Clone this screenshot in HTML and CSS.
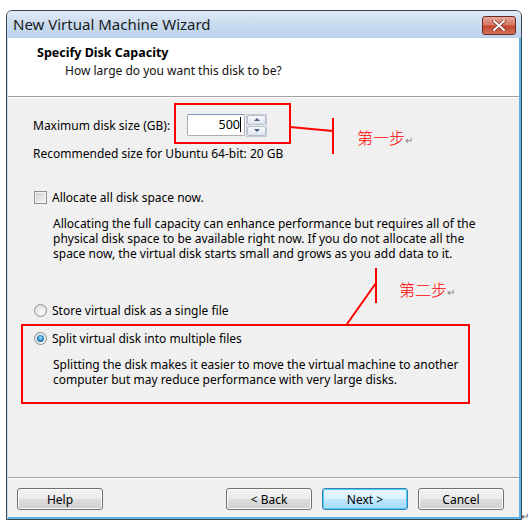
FILE: index.html
```html
<!DOCTYPE html>
<html lang="en">
<head>
    <meta charset="UTF-8">
    <title>New Virtual Machine Wizard</title>
    <link rel="stylesheet" href="styles.css">
</head>
<body>

  <div class="window">
    <div class="titlebar">
      <span class="title">New Virtual Machine Wizard</span>
      <div class="close-btn">
        <svg width="14" height="11" viewBox="0 0 14 11">
          <path d="M2 1 L12 10 M12 1 L2 10" stroke="#7a2a1c" stroke-width="3.4" stroke-linecap="round"/>
          <path d="M2 1 L12 10 M12 1 L2 10" stroke="#ffffff" stroke-width="2" stroke-linecap="round"/>
        </svg>
      </div>
    </div>

    <div class="client">
      <div class="header">
        <div class="header-title">Specify Disk Capacity</div>
        <div class="header-sub">How large do you want this disk to be?</div>
      </div>

      <div class="content">
        <div class="size-row">
          <span class="size-label">Maximum disk size (GB):</span>
          <div class="spin-box">
            <div class="spin-input">500<span class="caret"></span></div>
            <div class="spin-buttons">
              <div class="spin-btn"><span class="tri-up"></span></div>
              <div class="spin-btn"><span class="tri-down"></span></div>
            </div>
          </div>
        </div>
        <p class="recommend">Recommended size for Ubuntu 64-bit: 20 GB</p>

        <label class="option check-row">
          <span class="checkbox"></span>
          Allocate all disk space now.
        </label>
        <p class="desc">Allocating the full capacity can enhance performance but requires all of the physical disk space to be available right now. If you do not allocate all the space now, the virtual disk starts small and grows as you add data to it.</p>

        <label class="option radio-row first-radio">
          <span class="radio"></span>
          Store virtual disk as a single file
        </label>
        <label class="option radio-row second-radio">
          <span class="radio checked"></span>
          Split virtual disk into multiple files
        </label>
        <p class="desc">Splitting the disk makes it easier to move the virtual machine to another computer but may reduce performance with very large disks.</p>
      </div>

      <div class="footer">
        <button class="btn">Help</button>
        <div class="nav-buttons">
          <button class="btn">&lt; Back</button>
          <button class="btn default">Next &gt;</button>
          <button class="btn">Cancel</button>
        </div>
      </div>
    </div>
  </div>

  <!-- red annotations drawn over the screenshot -->
  <svg class="marks" width="529" height="531">
    <rect x="175" y="104" width="115" height="39" fill="none" stroke="#ff0000" stroke-width="2"/>
    <path d="M290 127 L333 131 M333 118 L333 154" stroke="#ff0000" stroke-width="2" fill="none"/>
    <path d="M376 268 L376 303 M376 283 L347 324" stroke="#ff0000" stroke-width="2" fill="none"/>
    <rect x="22" y="325" width="447" height="78" fill="none" stroke="#ff0000" stroke-width="2"/>
  </svg>
  <span class="note note-one">第一步<span class="ret">↵</span></span>
  <span class="note note-two">第二步<span class="ret">↵</span></span>
  <span class="end-mark">↵</span>

</body>
</html>
```

FILE: styles.css
```css
body {
    margin: 0;
    background-color: #fff;
    font-family: "Noto Sans", "Open Sans", sans-serif;
    font-size: 12px;
    color: #000;
    position: relative;
    width: 529px;
    height: 531px;
    overflow: hidden;
}

.window {
    margin: 10px 0 0 6px;
    width: 516px;
    height: 510px;
    box-sizing: border-box;
    border: 1px solid #3b4654;
    border-radius: 6px 6px 0 0;
    background-color: #c4d8ee;
    display: flex;
    flex-direction: column;
}

.titlebar {
    height: 27px;
    display: flex;
    align-items: center;
    justify-content: space-between;
    padding: 0 5px 0 6px;
    background: linear-gradient(#dfe9f5, #c6d9ee 60%, #bcd3ec);
    border-radius: 5px 5px 0 0;
}

.title {
    font-size: 15px;
    color: #1a1a1a;
    margin-top: -1px;
}

.close-btn {
    width: 34px;
    height: 19px;
    margin-top: 2px;
    box-sizing: border-box;
    border: 1px solid #6b2a22;
    border-radius: 3px;
    background: linear-gradient(#e9a99a, #d47461 48%, #c4452c 52%, #d5735c);
    display: flex;
    align-items: center;
    justify-content: center;
}

.client {
    flex: 1;
    display: flex;
    flex-direction: column;
    margin-left: 1px;
    border-right: 2px solid #5bb3e3;
    border-bottom: 2px solid #5bb3e3;
    background-color: #f0f0f0;
}

.header {
    height: 58px;
    background-color: #fff;
    padding-left: 29px;
    border-bottom: 1px solid #a0a0a0;
    box-shadow: 0 1px 0 #fff;
}

.header-title {
    font-weight: bold;
    font-size: 12.5px;
    margin-top: 7px;
    line-height: 16px;
}

.header-sub {
    margin-left: 28px;
    margin-top: 2px;
    line-height: 16px;
    color: #111;
}

.content {
    flex: 1;
    padding-left: 25px;
    border-bottom: 1px solid #a0a0a0;
    box-shadow: 0 1px 0 #fff;
}

.size-row {
    display: flex;
    align-items: center;
    margin-top: 17px;
    height: 22px;
}

.size-label {
    width: 154px;
}

.spin-box {
    display: flex;
    align-items: center;
}

.spin-input {
    width: 58px;
    height: 22px;
    box-sizing: border-box;
    border: 1px solid #abadb3;
    border-top-color: #7a9ac4;
    border-radius: 2px;
    background-color: #fff;
    text-align: right;
    padding-right: 3px;
    line-height: 20px;
    font-size: 12.5px;
}

.caret {
    display: inline-block;
    width: 1px;
    height: 15px;
    background-color: #000;
    vertical-align: -3px;
}

.spin-buttons {
    margin-left: 1px;
    display: flex;
    flex-direction: column;
    gap: 1px;
    border: 1px solid #c6cbd3;
    padding: 0;
}

.spin-btn {
    width: 19px;
    height: 10px;
    background: linear-gradient(#f6f8fb, #dfe5ee);
    border: 1px solid #b4bdcb;
    border-radius: 2px;
    box-sizing: border-box;
    display: flex;
    align-items: center;
    justify-content: center;
}

.tri-up {
    border-left: 3px solid transparent;
    border-right: 3px solid transparent;
    border-bottom: 3px solid #4a6186;
}

.tri-down {
    border-left: 3px solid transparent;
    border-right: 3px solid transparent;
    border-top: 3px solid #4a6186;
}

p {
    margin: 0;
    line-height: 15px;
}

.recommend {
    margin-top: 10px;
}

.option {
    display: flex;
    align-items: center;
    gap: 5px;
    line-height: 15px;
    margin-left: 1px;
}

.check-row {
    margin-top: 29px;
}

.desc {
    margin: 11px 0 0 20px;
    width: 432px;
}

.first-radio {
    margin-top: 42px;
}

.second-radio {
    margin-top: 13px;
}

.checkbox {
    width: 13px;
    height: 13px;
    box-sizing: border-box;
    border: 1px solid #8e8f8f;
    background: linear-gradient(135deg, #cbcfd5, #f6f6f6);
    box-shadow: inset 0 0 0 1px #f4f4f4;
}

.radio {
    width: 13px;
    height: 13px;
    box-sizing: border-box;
    border: 1px solid #8e8f8f;
    border-radius: 50%;
    background: radial-gradient(circle at 60% 65%, #fbfbfb, #d3d6da);
    position: relative;
}

.radio.checked::after {
    content: "";
    position: absolute;
    left: 2px;
    top: 2px;
    width: 7px;
    height: 7px;
    border-radius: 50%;
    background: radial-gradient(circle at 50% 40%, #9fe0ff, #1d79b5 60%, #0e4d7a);
}

.footer {
    height: 39px;
    box-sizing: border-box;
    display: flex;
    justify-content: space-between;
    align-items: flex-start;
    padding: 10px 15px 0 9px;
}

.nav-buttons {
    display: flex;
    gap: 10px;
}

.btn {
    width: 86px;
    height: 22px;
    margin: 0;
    padding: 0;
    font-family: "Noto Sans", "Open Sans", sans-serif;
    font-size: 12px;
    color: #000;
    border: 1px solid #707070;
    border-radius: 3px;
    background: linear-gradient(#f2f2f2, #ebebeb 50%, #dddddd 51%, #cfcfcf);
    box-shadow: inset 0 0 0 1px #fcfcfc;
}

.btn.default {
    border-color: #3c7fb1;
    background: linear-gradient(#eaf6fd, #d9f0fc 50%, #bee6fd 51%, #a7d9f5);
    box-shadow: inset 0 0 0 1px #48d1fa;
}

.marks {
    position: absolute;
    left: 0;
    top: 0;
}

.note {
    position: absolute;
    color: #ff0000;
    font-family: "Noto Sans CJK SC", sans-serif;
    font-weight: 300;
    font-size: 16px;
    line-height: 20px;
}

.note .ret {
    color: #808080;
    font-size: 10px;
}

.note-one {
    left: 357px;
    top: 127px;
}

.note-two {
    left: 399px;
    top: 279px;
}

.end-mark {
    position: absolute;
    left: 521px;
    top: 509px;
    font-size: 10px;
    color: #555;
}
```
